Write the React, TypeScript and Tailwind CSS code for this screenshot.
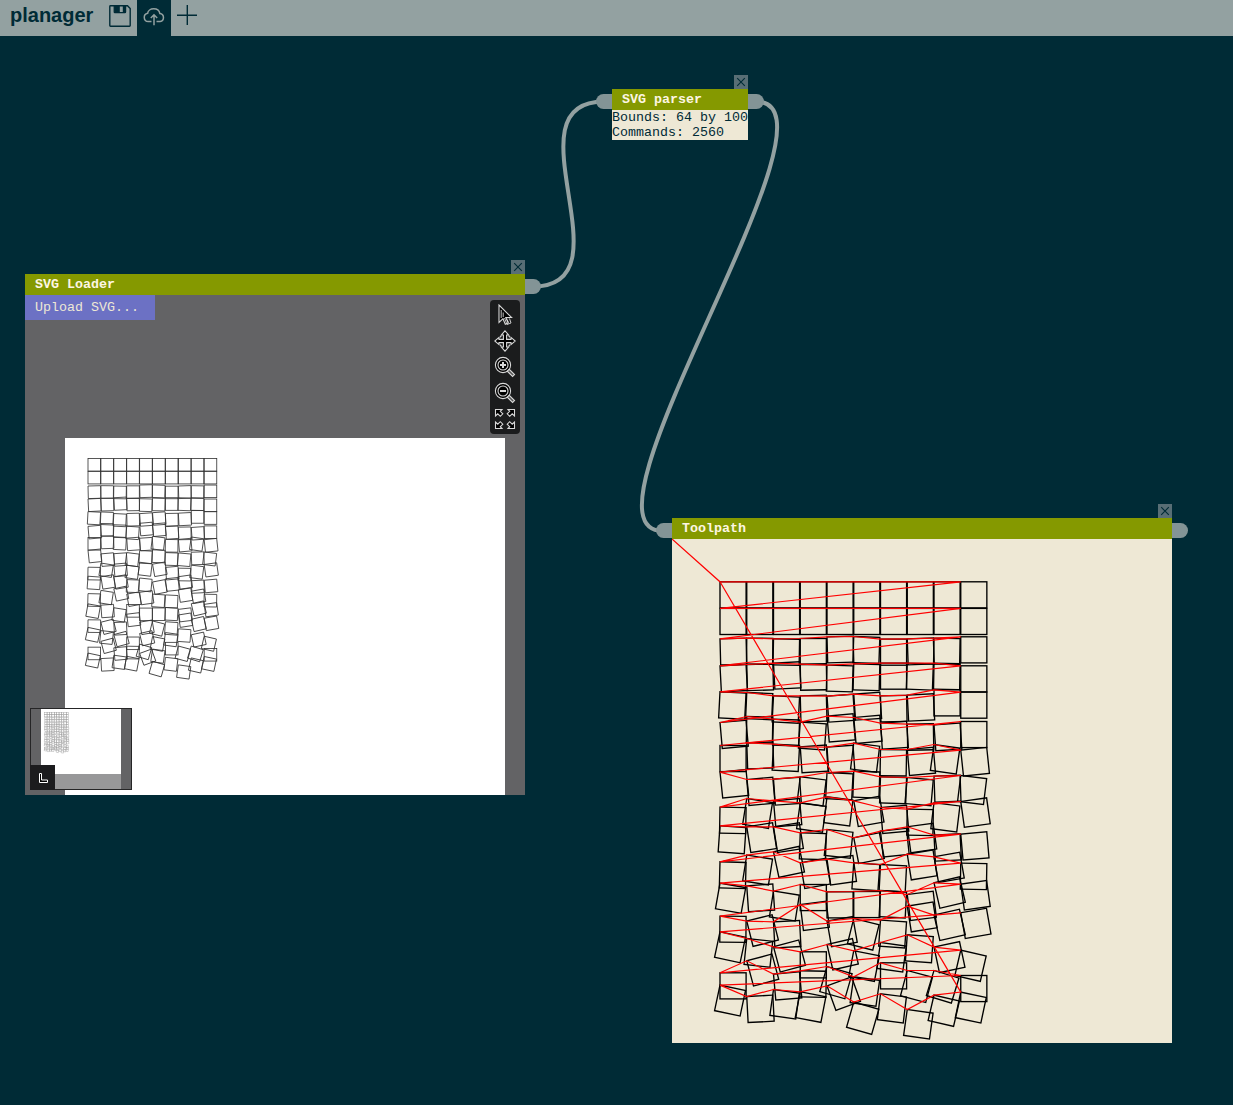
import type { ReactNode } from "react";

const PITCH = 26.75;
const SIDE = 26.1;

// One entry per tile: distance of its pivot below the first row, and its rotation in degrees.
type Tile = [number, number];

const ROWS: Tile[][] = [
  [[0, 0], [0, 0], [0, 0], [0, 0], [0, 0], [0, 0], [0, 0], [0, 0], [0, 0], [0, 0]],
  [[26.6, 0], [26.6, 0], [26.6, 0], [26.6, 0], [26.6, 0], [26.6, 0], [26.6, 0], [26.6, 0], [26.6, 0], [26.6, 0]],
  [[57, -1.5], [56.3, 0.5], [57, 1], [56.7, 0], [55, -1.5], [54.7, 2], [57.3, 0], [57, -2], [56.3, 1], [55, 0]],
  [[84, -3], [82.7, -1.5], [81.3, -3], [82.3, -1], [83.3, 1.5], [82, 1.5], [81.3, 0], [81.3, 2], [81.3, 1], [84, 0]],
  [[110, 3], [110.7, 2.5], [114, 3], [114, -1.5], [114.3, -4], [112.3, -4], [114, -1], [113.3, -3], [108, 0], [110.3, 0]],
  [[140.7, -5], [134.7, 1], [137.3, 2], [140.3, 4], [134.3, -5], [135.7, -5], [141.3, -4], [142.3, -1], [143, -4], [139.7, 0]],
  [[163.7, 0], [161, -2], [162.3, 3], [165, -4], [165.3, -4], [161.3, 7], [167.7, 1], [167.7, -5], [162.7, 8], [168.3, -6]],
  [[190.3, -6], [197.7, -5], [197.3, -4], [195, 7], [190.7, 3], [189.3, 2], [195, 2], [195.7, 5], [194.3, -2], [193.7, 7]],
  [[225.3, 1], [216.7, 9], [219, -5], [221, 8], [215, 7], [219, -10], [225.7, -5], [227.3, 1], [221, 7], [219.7, -8]],
  [[244, 4], [245, -9], [245, -9], [251, 2], [247.7, 6], [256, -11], [249.3, -6], [245, -8], [253.3, -3], [252.3, -5]],
  [[280, 1.5], [273.3, 9], [270, -12], [281, -10], [277.3, -8], [281, 4], [282.7, 3], [272.3, -9], [275, -10], [281.3, 1]],
  [[301.3, 10], [304, -4], [309.3, 9], [302.7, 0], [310, 0], [309.7, 0], [308.7, 3], [312.7, -7], [301, -13], [302.3, -8]],
  [[334.3, 0.5], [339.3, -14], [340, -3], [322.7, -7], [339.3, -10], [336.7, 14], [338.3, 4], [324.3, -9], [333.3, -13], [331, -10]],
  [[350, 12], [356.7, 6], [365, -15], [370, 0], [362.7, -13], [369, 11], [360.7, 8], [353, 4], [365.3, -12], [368.3, 13]],
  [[391, 0], [379, -15], [392.3, -5], [389, 1], [384.7, 16], [395, 8], [381, 0], [388.7, 15], [388.7, 17], [393.7, 0]],
  [[403.3, 12], [414.7, -3], [407.7, 8], [410, 11], [404, -20], [420.3, 16], [412, 7], [427.7, 8], [413.3, 13], [410.3, 12]],
];

const tiles = ROWS.flatMap((row, r) =>
  row.map(([y, angle], c) => ({ key: `${r}-${c}`, x: c * PITCH, y, angle })),
);

const travel = tiles.map((t) => `${t.x},${t.y}`).join(" ");

function Tiles({ stroke, width }: { stroke: string; width: number }) {
  return (
    <g fill="none" stroke={stroke} strokeWidth={width}>
      {tiles.map((t) => (
        <rect
          key={t.key}
          width={SIDE}
          height={SIDE}
          transform={`translate(${t.x} ${t.y}) rotate(${t.angle})`}
        />
      ))}
    </g>
  );
}

function Port({ side }: { side: "in" | "out" }) {
  return side === "in" ? (
    <span className="absolute right-full top-[5px] h-[15px] w-4 rounded-l-full bg-[#839496]" />
  ) : (
    <span className="absolute left-full top-[5px] h-[15px] w-4 rounded-r-full bg-[#839496]" />
  );
}

type NodeProps = {
  title: string;
  className: string;
  input?: boolean;
  children: ReactNode;
};

function Node({ title, className, input = false, children }: NodeProps) {
  return (
    <section className={`absolute ${className}`}>
      <button className="absolute -top-3.5 right-0 flex size-3.5 items-center justify-center bg-[#586e75]">
        <svg viewBox="0 0 14 14" className="size-3.5" stroke="#002b36" strokeWidth="1.1">
          <path d="M3.200 3.200l7.600 7.600M10.800 3.200l-7.600 7.600" />
        </svg>
      </button>
      {input && <Port side="in" />}
      <Port side="out" />
      <h2 className="h-[21px] bg-[#859900] pl-2.5 leading-[22px] font-bold text-[#fdf6e3]">{title}</h2>
      {children}
    </section>
  );
}

const toolIcons: { name: string; drawing: ReactNode }[] = [
  {
    name: "Select",
    drawing: (
      <>
        <path d="M5 1v17.500l4-3.800 2.300 5.500 2.900-1.300-2.400-5.300 5.800-.1z" fill="#000" />
        <path d="M7.200 6v8M9.200 8.500v4.500" strokeWidth="0.9" />
        <path d="M10.500 14l2.500 6.500 4-1.500-1.500-4.500M13 15.500l1.500 3" strokeWidth="0.9" />
      </>
    ),
  },
  {
    name: "Pan",
    drawing: (
      <>
        <path
          d="M11 .8l3.600 4.200h-2v4.400H17v-2l4.200 3.600-4.200 3.600v-2h-4.400V17h2L11 21.200 7.400 17h2v-4.400H5v2L.8 11 5 7.400v2h4.400V5h-2z"
          fill="#000"
        />
        <path d="M6.500 7.500v-1.500h1.500M14 6h1.500v1.500M15.500 14.500V16H14M8 16H6.500v-1.500" strokeWidth="0.9" />
      </>
    ),
  },
  {
    name: "Zoom in",
    drawing: (
      <>
        <circle cx="9" cy="9" r="7.600" fill="#000" />
        <circle cx="9" cy="9" r="5" />
        <path d="M9 6v6M6 9h6" strokeWidth="2" />
        <path d="M13.300 15.200l1.900-1.900 5.300 5.300-1.900 1.900z" fill="#555" />
      </>
    ),
  },
  {
    name: "Zoom out",
    drawing: (
      <>
        <circle cx="9" cy="9" r="7.600" fill="#000" />
        <circle cx="9" cy="9" r="5" />
        <path d="M6 9h6" strokeWidth="2" />
        <path d="M13.300 15.200l1.900-1.900 5.300 5.300-1.900 1.900z" fill="#555" />
      </>
    ),
  },
  {
    name: "Fit",
    drawing: (
      <>
        <path d="M1.500 1.500h6.500L6.300 3.300l2.500 2.500-2.500 2.500-2.500-2.500L1.500 8z" fill="#000" />
        <path d="M20.500 1.500H14l1.700 1.800-2.500 2.500 2.500 2.500 2.500-2.500L20.500 8z" fill="#000" />
        <path d="M1.500 20.500h6.500l-1.700-1.800 2.500-2.500-2.500-2.500-2.500 2.500L1.500 14z" fill="#000" />
        <path d="M20.500 20.500H14l1.700-1.800-2.500-2.500 2.500-2.500 2.500 2.500L20.500 14z" fill="#000" />
      </>
    ),
  },
];

function Header() {
  return (
    <header className="flex h-9 bg-[#93a1a1] text-[#002b36]">
      <h1 className="w-[103px] pl-2.5 font-['Liberation_Sans',Arial,sans-serif] text-[20px] leading-[30px] font-bold">
        planager
      </h1>
      <button className="flex w-[34px] justify-center pt-[5px]">
        <svg viewBox="0 0 22 22" className="size-[22px]" fill="none" stroke="currentColor" strokeWidth="1.400">
          <path d="M.8 1.500Q.8.800 1.500.8H18.500L21.200 3.500V20.500Q21.200 21.200 20.500 21.200H1.500Q.8 21.200.8 20.500Z" />
          <path d="M5.200 1v6q0 .7.700.7h10q.7 0 .7-.7V1" strokeWidth="1.200" />
          <path d="M5.200 1h5.600v6.500H5.200zM13.800 1h2.500v6.500h-2.500z" fill="currentColor" stroke="none" />
        </svg>
      </button>
      <button className="flex w-[34px] justify-center bg-[#002b36] pt-[5px] text-[#93a1a1]">
        <svg viewBox="0 0 22 22" className="size-[22px]" fill="none" stroke="currentColor" strokeWidth="1.500">
          <path d="M8.500 16.600H5.200A4.200 4.200 0 0 1 4.600 8.300C4.900 5.600 7.600 3.800 10.700 3.800c3.200 0 5.600 1.800 6.200 4.700a4.100 4.100 0 0 1 .2 8.100H13.500" />
          <path d="M11 20.200V10M7.800 13L11 9.800l3.200 3.200" />
        </svg>
      </button>
      <button className="flex w-8 justify-center pt-[5px]">
        <svg viewBox="0 0 20 20" className="size-5" stroke="currentColor" strokeWidth="1.400">
          <path d="M10.300 0v20M0 10.300h20" />
        </svg>
      </button>
    </header>
  );
}

function Wires() {
  return (
    <svg
      className="pointer-events-none absolute inset-0"
      width="1233"
      height="1069"
      viewBox="0 36 1233 1069"
      fill="none"
      stroke="#93a1a1"
      strokeWidth="4"
    >
      <path d="M533 286.500C633 286.500 504 101.500 604 101.500" />
      <path d="M756 101.500C856 101.500 563 531 663 531" />
    </svg>
  );
}

function Minimap() {
  return (
    <div className="absolute bottom-[5px] left-[5px] flex h-[82px] w-[102px] border border-[#252526] bg-[#636365] pl-[10px]">
      <div className="flex w-20 flex-col justify-between bg-white">
        <svg width="80" height="65" viewBox="0 0 80 65">
          <g transform="translate(3.700 3.200) scale(0.0895)">
            <Tiles stroke="#999999" width={4.5} />
          </g>
        </svg>
        <div className="h-[15px] bg-[#989899]" />
      </div>
      <button className="absolute -bottom-px -left-px flex size-[25px] items-center justify-center bg-[#1c1c1e]">
        <svg viewBox="0 0 12 12" className="size-3" fill="none" stroke="#ffffff" strokeWidth="1">
          <path d="M2.500 1.500h2v6.500h6v2.500h-8z" fill="#000" />
        </svg>
      </button>
    </div>
  );
}

export default function App() {
  return (
    <div className="flex h-[1105px] w-[1233px] flex-col overflow-hidden bg-[#002b36] font-['Liberation_Mono','Courier_New',monospace] text-[13.333px] text-[#002b36]">
      <Header />
      <main className="relative flex-1">
        <Wires />

        <Node title="SVG Loader" className="left-[25px] top-[238px] w-[500px]">
          <div className="relative flex h-[500px] flex-col overflow-hidden bg-[#636365]">
            <button className="h-[25px] w-[130px] bg-[#6c71c4] pl-2.5 text-left leading-[24px] text-[#eee8d5]">
              Upload SVG...
            </button>
            <div className="ml-10 mt-[118px] w-[440px] flex-1 bg-white">
              <svg width="440" height="357" viewBox="0 0 440 357">
                <g transform="translate(23 20.500) scale(0.4825)">
                  <Tiles stroke="#333333" width={1.7} />
                </g>
              </svg>
            </div>
            <div className="absolute right-[5px] top-[5px] flex h-[134px] w-[30px] flex-col items-center gap-1 rounded-sm bg-[#1b1c1d] pt-1">
              {toolIcons.map((icon) => (
                <button key={icon.name} aria-label={icon.name}>
                  <svg viewBox="0 0 22 22" className="size-[22px]" fill="none" stroke="#d8d8d8" strokeWidth="1.1">
                    {icon.drawing}
                  </svg>
                </button>
              ))}
            </div>
            <Minimap />
          </div>
        </Node>

        <Node title="SVG parser" input className="left-[612px] top-[53px] w-[136px]">
          <div className="h-[30px] bg-[#eee8d5] leading-[15px] whitespace-nowrap">
            <p>Bounds: 64 by 100</p>
            <p>Commands: 2560</p>
          </div>
        </Node>

        <Node title="Toolpath" input className="left-[672px] top-[482px] w-[500px]">
          <div className="h-[504px] bg-[#eee8d5]">
            <svg width="500" height="504" viewBox="0 0 500 504">
              <g transform="translate(48 42.800)">
                <Tiles stroke="#000000" width={1.35} />
                <polyline
                  points={`-48,-42.800 ${travel} 0,0`}
                  fill="none"
                  stroke="#ff0000"
                  strokeWidth="1.200"
                />
              </g>
            </svg>
          </div>
        </Node>
      </main>
    </div>
  );
}
